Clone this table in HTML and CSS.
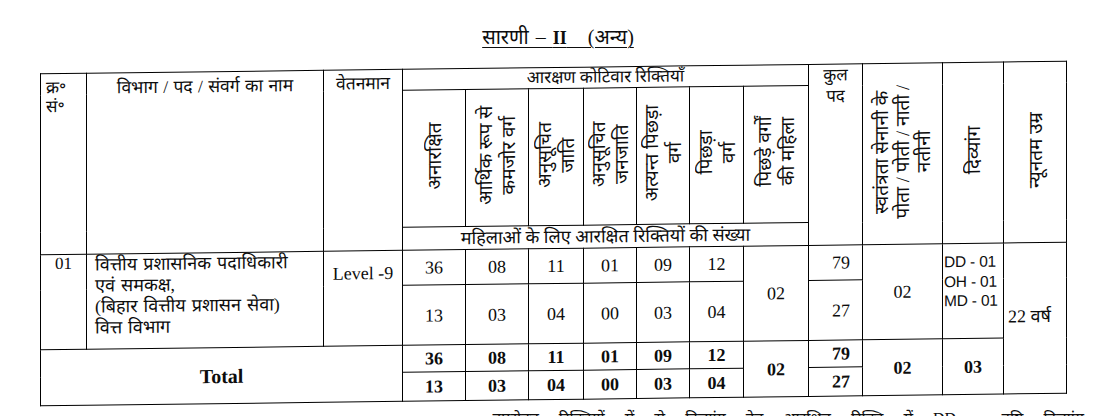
FILE: index.html
```html
<!DOCTYPE html>
<html lang="hi">
<head>
<meta charset="utf-8">
<title>सारणी – II (अन्य)</title>
<link rel="stylesheet" href="styles.css">
</head>
<body>
<div class="page">
  <h1 class="title"><span class="u">सारणी – <span class="roman">II</span>&nbsp;&nbsp; (अन्य)</span></h1>
  <table class="grid">
    <colgroup>
      <col class="c-sn"><col class="c-name"><col class="c-pay">
      <col class="c-a"><col class="c-b"><col class="c-c"><col class="c-d"><col class="c-e"><col class="c-f"><col class="c-g">
      <col class="c-total"><col class="c-ff"><col class="c-div"><col class="c-age">
    </colgroup>
    <tr class="h1">
      <th rowspan="3" class="top left sn">क्र॰<br>सं॰</th>
      <th rowspan="3" class="top hname">विभाग / पद / संवर्ग का नाम</th>
      <th rowspan="3" class="top hpay">वेतनमान</th>
      <th colspan="7" class="group">आरक्षण कोटिवार रिक्तियाँ</th>
      <th rowspan="3" class="top kul">कुल<br>पद</th>
      <th rowspan="3"><div class="vt vt-ff">स्वतंत्रता सेनानी के<br>पोता / पोती / नाती /<br>नतीनी</div></th>
      <th rowspan="3"><div class="vt">दिव्यांग</div></th>
      <th rowspan="3"><div class="vt">न्यूनतम उम्र</div></th>
    </tr>
    <tr class="h2">
      <th><div class="vt">अनारक्षित</div></th>
      <th><div class="vt">आर्थिक रूप से<br>कमजोर वर्ग</div></th>
      <th><div class="vt">अनुसूचित<br>जाति</div></th>
      <th><div class="vt">अनुसूचित<br>जनजाति</div></th>
      <th><div class="vt">अत्यन्त पिछड़ा<br>वर्ग</div></th>
      <th><div class="vt">पिछड़ा<br>वर्ग</div></th>
      <th><div class="vt">पिछड़े वर्गों<br>की महिला</div></th>
    </tr>
    <tr class="h3">
      <th colspan="7" class="women">महिलाओं के लिए आरक्षित रिक्तियों की संख्या</th>
    </tr>
    <tr class="r1a">
      <td rowspan="2" class="top sn-val">01</td>
      <td rowspan="2" class="top left dept">वित्तीय प्रशासनिक पदाधिकारी<br>एवं समकक्ष,<br>(बिहार वित्तीय प्रशासन सेवा)<br>वित्त विभाग</td>
      <td rowspan="2" class="top level">Level -9</td>
      <td class="num">36</td>
      <td class="num">08</td>
      <td class="num">11</td>
      <td class="num">01</td>
      <td class="num">09</td>
      <td class="num">12</td>
      <td rowspan="2" class="num">02</td>
      <td class="num kulv">79</td>
      <td rowspan="2" class="num">02</td>
      <td rowspan="2" class="top left divy">DD - 01<br>OH - 01<br>MD - 01</td>
      <td rowspan="4" class="top age">22 वर्ष</td>
    </tr>
    <tr class="r1b">
      <td class="num">13</td>
      <td class="num">03</td>
      <td class="num">04</td>
      <td class="num">00</td>
      <td class="num">03</td>
      <td class="num">04</td>
      <td class="num kulv">27</td>
    </tr>
    <tr class="t1">
      <td colspan="3" rowspan="2" class="total-label">Total</td>
      <td class="num b">36</td>
      <td class="num b">08</td>
      <td class="num b">11</td>
      <td class="num b">01</td>
      <td class="num b">09</td>
      <td class="num b">12</td>
      <td rowspan="2" class="num b">02</td>
      <td class="num b kulv">79</td>
      <td rowspan="2" class="num b">02</td>
      <td rowspan="2" class="num b">03</td>
    </tr>
    <tr class="t2">
      <td class="num b">13</td>
      <td class="num b">03</td>
      <td class="num b">04</td>
      <td class="num b">00</td>
      <td class="num b">03</td>
      <td class="num b">04</td>
      <td class="num b kulv">27</td>
    </tr>
  </table>
  <p class="note">उपरोक्त रिक्तियों में से दिव्यांग हेतु आरक्षित रिक्ति में DD - दृष्टि दिव्यांग</p>
</div>
</body>
</html>
```

FILE: styles.css
```css
html, body {
  margin: 0;
  padding: 0;
  background: #ffffff;
}

body {
  width: 1108px;
  height: 416px;
  overflow: hidden;
  color: #0d0d0d;
  font-family: "Liberation Serif", "Noto Sans Devanagari", "Lohit Devanagari", "FreeSerif", serif;
}

.page {
  padding-top: 26px;
}

.title {
  margin: 0;
  height: 41px;
  font-size: 20px;
  font-weight: normal;
  text-align: center;
  line-height: 22px;
  word-spacing: 2px;
  padding-left: 8px;
}

.title .u {
  text-decoration: underline;
  text-decoration-thickness: 1px;
  text-underline-offset: 3px;
}

.title .roman {
  font-weight: bold;
  font-size: 18px;
}

.grid {
  margin-left: 40px;
  width: 1026px;
  table-layout: fixed;
  border-collapse: collapse;
  font-size: 17px;
  transform: skewY(-0.7deg);
}

.grid th,
.grid td {
  border: 1px solid #000;
  padding: 0;
  text-align: center;
  vertical-align: middle;
  font-weight: normal;
  line-height: 20px;
}

.c-sn { width: 46px; }
.c-name { width: 237px; }
.c-pay { width: 79px; }
.c-a { width: 63px; }
.c-b { width: 63px; }
.c-c { width: 55px; }
.c-d { width: 53px; }
.c-e { width: 53px; }
.c-f { width: 54px; }
.c-g { width: 65px; }
.c-total { width: 54px; }
.c-ff { width: 80px; }
.c-div { width: 61px; }
.c-age { width: 63px; }

.h1 { height: 21px; }
.h2 { height: 137px; }
.h3 { height: 23px; }
.r1a { height: 35px; }
.r1b { height: 60px; }
.t1 { height: 27px; }
.t2 { height: 29px; }

.grid .top {
  vertical-align: top;
  padding-top: 3px;
}

.grid .left {
  text-align: left;
}

.grid .sn {
  padding-left: 5px;
  padding-top: 4px;
  line-height: 19px;
  font-size: 17px;
}

.grid .hname {
  font-size: 17.5px;
  word-spacing: 1px;
  padding-top: 4px;
}

.grid .hpay {
  font-size: 17.5px;
  padding-top: 3px;
}

.grid .group {
  font-size: 17px;
  line-height: 18px;
}

.grid .kul {
  padding-top: 0;
  line-height: 21px;
}

.grid .women {
  font-size: 18px;
  line-height: 20px;
}

.vt {
  display: inline-block;
  writing-mode: vertical-rl;
  transform: rotate(180deg);
  text-align: center;
  line-height: 23px;
  font-size: 19px;
}

.vt-ff {
  line-height: 21px;
}

.grid .num {
  font-size: 18px;
  line-height: 20px;
}

.grid .b {
  font-weight: bold;
}

.grid .kulv {
  text-align: right;
  padding-right: 12px;
}

.grid .sn-val {
  font-size: 17px;
  line-height: 18px;
  padding-top: 0;
}

.grid .dept {
  padding-left: 8px;
  padding-top: 0;
  font-size: 18px;
  line-height: 21px;
  word-spacing: 1.5px;
}

.grid .level {
  font-size: 18px;
  padding-top: 12px;
}

.grid .divy {
  font-family: "Liberation Sans", sans-serif;
  font-size: 15.5px;
  line-height: 19.5px;
  padding-top: 8px;
  padding-left: 1px;
  white-space: nowrap;
  letter-spacing: -0.2px;
}

.grid .age {
  font-size: 18px;
  text-align: left;
  padding-left: 4px;
  padding-top: 63px;
}

.grid .total-label {
  font-size: 20px;
  font-weight: bold;
}

.note {
  margin: 9px 0 0 0;
  padding-right: 24px;
  text-align: right;
  font-size: 16px;
  line-height: 20px;
  word-spacing: 16px;
}
```
